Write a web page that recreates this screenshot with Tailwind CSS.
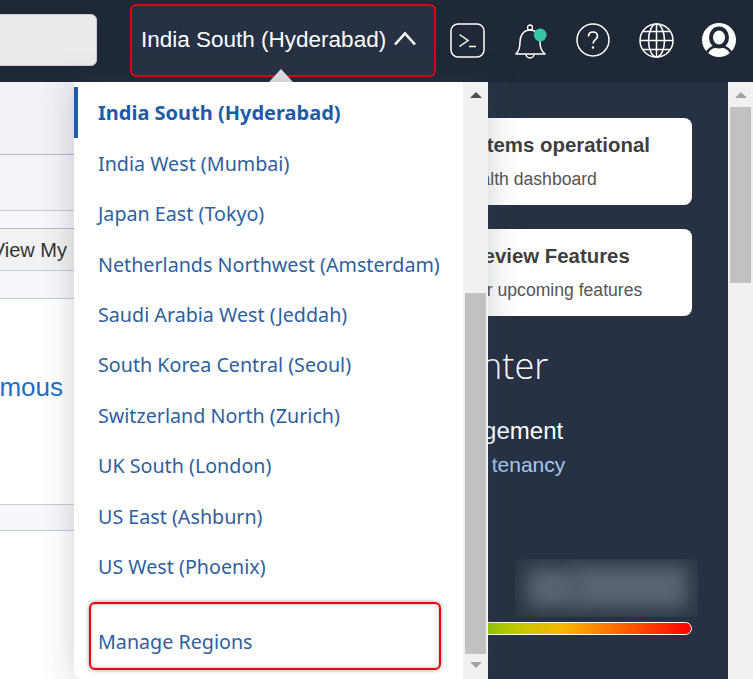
<!DOCTYPE html>
<html>
<head>
<meta charset="utf-8">
<script src="https://cdn.jsdelivr.net/npm/@tailwindcss/browser@4"></script>
</head>
<body class="m-0 overflow-hidden font-['Liberation_Sans',sans-serif]">
<div class="relative w-[753px] h-[679px] overflow-hidden bg-white">
  <header class="h-[82px] bg-[#1e2836] flex items-center">
    <div class="ml-[-40px] w-[137px] h-[52px] bg-[#ebebeb] rounded-md border border-[#ccc] mt-[-2px]"></div>
    <div class="relative ml-[33px] w-[306px] h-[73px] mt-[-2px] rounded-md border-2 border-[#e3000f] bg-[#263143] flex items-center pl-[9px] gap-[7px] text-white text-[22.5px]">
      <span class="mt-[-1px]">India South (Hyderabad)</span>
      <svg class="mt-[-3px]" width="24" height="15" viewBox="0 0 24 15" fill="none" stroke="white" stroke-width="2.6"><path d="M2 13.5 12 2.5l10 11"/></svg>
    </div>
    <div class="ml-[14px] flex items-center">
      <svg width="35" height="35" viewBox="0 0 35 35" fill="none" stroke="white" stroke-width="1.5" class="mt-[-2px]"><rect x="1" y="1" width="33" height="33" rx="7"/><path d="M9.500 11.500l8.500 6-8.500 6M19 23.500h7"/></svg>
      <svg width="32" height="36" viewBox="0 0 32 36" fill="none" class="ml-[30px] mt-[1px]"><path d="M1 30c3-3 4-7 4-12 0-7 4-12 10-12s10 5 10 12c0 5 1 9 5 12z" stroke="white" stroke-width="1.5" stroke-linejoin="round"/><circle cx="15" cy="3.5" r="2.5" stroke="white" stroke-width="1.3"/><path d="M11 30a4 4 0 0 0 8 0" stroke="white" stroke-width="1.5"/><circle cx="25.200" cy="11" r="6.400" fill="#36c5a5"/></svg>
      <svg width="34" height="34" viewBox="0 0 34 34" fill="none" stroke="white" stroke-width="1.5" class="ml-[29px] mt-[-2px]"><circle cx="17" cy="17" r="16"/><path d="M12.500 13.500c0-3 2-4.500 4.500-4.500s4.500 1.700 4.500 4.200c0 3.300-4.500 3.500-4.500 7.300" stroke-width="1.7"/><circle cx="17" cy="24.500" r="1.200" fill="white" stroke="none"/></svg>
      <svg width="35" height="35" viewBox="0 0 35 35" fill="none" stroke="white" stroke-width="1.5" class="ml-[29px] mt-[-2px]"><circle cx="17.500" cy="17.500" r="16.500"/><ellipse cx="17.500" cy="17.500" rx="8" ry="16.500"/><path d="M1 17.500h33M4 8.500h27M4 26.500h27M17.500 1v33"/></svg>
      <svg width="34" height="34" viewBox="0 0 34 34" class="ml-[28px] mt-[-2px]"><circle cx="17" cy="17" r="17" fill="white"/><ellipse cx="17" cy="14.500" rx="8" ry="9" fill="none" stroke="#1e2836" stroke-width="4"/><path d="M5 29.500c3-5 7-6.500 12-6.500s9 1.500 12 6.500" fill="none" stroke="#1e2836" stroke-width="2.500"/></svg>
    </div>
  </header>

  <main class="flex h-[597px]">
    <section class="w-[250px] shrink-0 text-[#333] bg-white">
      <div class="h-[73px] bg-[#f0f2f5] border-b border-[#b4bcc6]"></div>
      <div class="h-[56px] bg-[#f3f4f7] border-b border-[#c6ccd3]"></div>
      <div class="h-[18px] bg-[#f5f7fb] border-b border-[#b4bcc6]"></div>
      <div class="h-[42px] bg-[#f2f2f2] border-b border-[#c6ccd3] flex items-center justify-end pr-[183px] text-[20px] whitespace-nowrap">View My</div>
      <div class="h-[28px] bg-[#f5f7fb] border-b border-[#c6ccd3]"></div>
      <div class="h-[205px] pt-[73px] pr-[187px] text-right text-[26px] text-[#1f6fc6] whitespace-nowrap leading-[30px]">
        <span class="ml-[-200px]">Autonomous</span>
      </div>
      <div class="h-[27px] bg-[#f5f7fb] border-y border-[#c6ccd3]"></div>
    </section>

    <section class="w-[478px] shrink-0 bg-[#263143] pt-[36px] pr-[36px] pl-[100px]">
      <div class="h-[87px] bg-white rounded-lg pl-[71px] pt-[15px] text-[#3f3f3f] whitespace-nowrap">
        <p class="text-[20.400px] font-bold leading-6">All systems operational</p>
        <p class="text-[17.600px] leading-5 mt-[12px] pl-[37px] text-[#555]">Health dashboard</p>
      </div>
      <div class="h-[87px] mt-[24px] bg-white rounded-lg pl-[72px] pt-[15px] text-[#3f3f3f] whitespace-nowrap">
        <p class="text-[20.400px] font-bold leading-6 pl-[40px]">Preview Features</p>
        <p class="text-[17.600px] leading-5 mt-[12px] pl-[9px] text-[#555]">See our upcoming features</p>
      </div>
      <p class="mt-[28px] text-[36px] leading-[44px] font-light text-white whitespace-nowrap font-['Open_Sans',sans-serif] pl-[89px]">Center</p>
      <p class="mt-[29px] text-[24px] leading-7 font-medium text-white whitespace-nowrap ml-[-23px]">Tenancy Management</p>
      <p class="mt-[8px] text-[21px] leading-6 text-[#a8c8ea] whitespace-nowrap pl-[54px] [word-spacing:6px]">Manage tenancy</p>
      <div class="relative h-[58px] mt-[82px] ml-[165px] mr-[-6px] bg-[#2b3647] overflow-hidden">
        <div class="absolute left-[12px] top-[9px] w-[52px] h-[40px] bg-[#59636f] blur-[9px]"></div>
        <div class="absolute left-[60px] top-[7px] w-[112px] h-[42px] bg-[#5b6471] blur-[9px]"></div>
      </div>
      <div class="h-[13px] mt-[5px] rounded-full border border-white bg-[linear-gradient(90deg,#0aa84f_0%,#9bd400_40%,#f9b800_62%,#ff7a00_75%,#f00_100%)]"></div>
    </section>

    <aside class="w-[25px] bg-[#f1f1f1] flex flex-col items-center">
      <div class="mt-[10px] w-0 h-0 border-x-[6px] border-x-transparent border-b-[6px] border-b-[#a3a3a3]"></div>
      <div class="mt-[9px] w-[21px] h-[176px] bg-[#c1c1c1]"></div>
    </aside>
  </main>

  <!-- caret of the open menu -->
  <div class="absolute left-[269px] top-[69px] w-0 h-0 border-x-[12px] border-x-transparent border-b-[13px] border-b-[#e8e8e8]"></div>

  <!-- region menu -->
  <div class="absolute left-[74px] top-[82px] w-[414px] h-[597px] bg-white rounded-bl-lg shadow-[0_0_32px_rgba(60,70,85,0.26)] flex font-['Noto_Sans',sans-serif] text-[19.700px] text-[#2f5f9e]">
    <div class="w-[389px] pt-[5.300px]">
      <ul>
        <li class="h-[50.44px] leading-[52px] border-l-4 border-[#1e5ca8] pl-[20px] font-bold text-[20px] text-[#1e5ca8]">India South (Hyderabad)</li>
        <li class="h-[50.44px] leading-[52px] pl-[24px]">India West (Mumbai)</li>
        <li class="h-[50.44px] leading-[52px] pl-[24px]">Japan East (Tokyo)</li>
        <li class="h-[50.44px] leading-[52px] pl-[24px]">Netherlands Northwest (Amsterdam)</li>
        <li class="h-[50.44px] leading-[52px] pl-[24px]">Saudi Arabia West (Jeddah)</li>
        <li class="h-[50.44px] leading-[52px] pl-[24px]">South Korea Central (Seoul)</li>
        <li class="h-[50.44px] leading-[52px] pl-[24px]">Switzerland North (Zurich)</li>
        <li class="h-[50.44px] leading-[52px] pl-[24px]">UK South (London)</li>
        <li class="h-[50.44px] leading-[52px] pl-[24px]">US East (Ashburn)</li>
        <li class="h-[50.44px] leading-[52px] pl-[24px]">US West (Phoenix)</li>
      </ul>
      <div class="ml-[15px] mt-[10px] w-[352px] h-[68px] rounded-md border-2 border-[#f0000f] shadow-[0_0_4px_rgba(0,0,0,0.4),inset_0_0_4px_rgba(0,0,0,0.25)] pl-[7px] pt-[13px] leading-[50px]">Manage Regions</div>
    </div>
    <div class="w-[25px] bg-[#f1f1f1] flex flex-col items-center">
      <div class="mt-[10px] w-0 h-0 border-x-[6px] border-x-transparent border-b-[6px] border-b-[#505050]"></div>
      <div class="mt-[195px] w-[21px] h-[361px] bg-[#c1c1c1]"></div>
      <div class="mt-[8px] w-0 h-0 border-x-[6px] border-x-transparent border-t-[6px] border-t-[#a3a3a3]"></div>
    </div>
  </div>
</div>
</body>
</html>
